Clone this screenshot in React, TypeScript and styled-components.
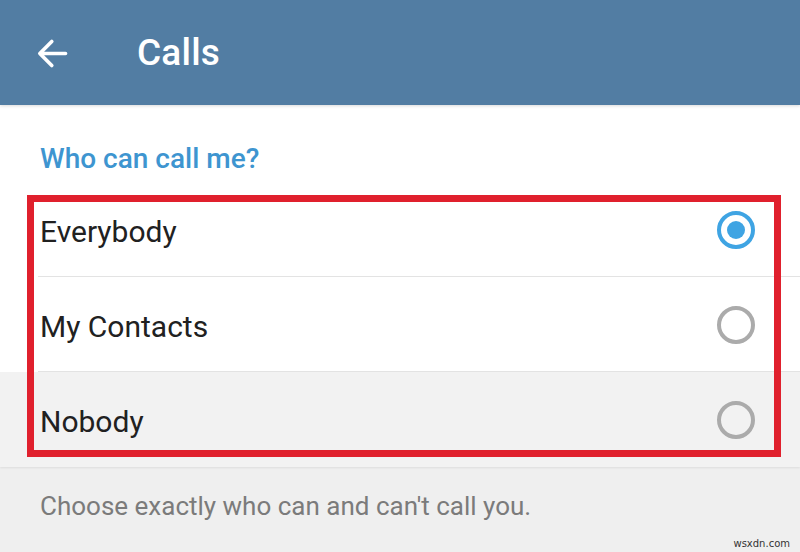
import React from "react";
import styled, { createGlobalStyle } from "styled-components";

const GlobalStyle = createGlobalStyle`
  body {
    margin: 0;
    background: #efefef;
    font-family: Roboto, "Noto Sans", Arial, sans-serif;
  }
`;

const Page = styled.div`
  width: 800px;
  height: 552px;
  overflow: hidden;
  position: relative;
  background: #efefef;
`;

const Header = styled.header`
  height: 105px;
  background: #527da3;
  display: flex;
  align-items: center;
  padding-left: 38px;
  box-shadow: 0 1px 3px rgba(0, 0, 0, 0.15);
  position: relative;
  z-index: 1;
`;

const BackButton = styled.svg`
  width: 29px;
  height: 29px;
  overflow: visible;
  margin-top: 1px;
`;

const Title = styled.h1`
  margin: 0 0 0 70px;
  color: #ffffff;
  font-size: 37px;
  font-weight: 500;
  letter-spacing: 0.2px;
`;

const Section = styled.section`
  background: #ffffff;
  box-shadow: 0 1px 2px rgba(0, 0, 0, 0.08);
`;

const SectionTitle = styled.div`
  height: 77px;
  padding: 30px 40px 0;
  box-sizing: border-box;
  display: flex;
  align-items: center;
  color: #3e95d0;
  font-size: 28px;
  font-weight: 500;
`;

const List = styled.div`
  position: relative;
`;

const Row = styled.div<{ $pressed?: boolean; $last?: boolean }>`
  height: 95px;
  display: flex;
  align-items: center;
  justify-content: space-between;
  padding: 0 45px 0 40px;
  position: relative;
  background: ${(p) => (p.$pressed ? "#f2f2f2" : "#ffffff")};

  &::after {
    content: "";
    display: ${(p) => (p.$last ? "none" : "block")};
    position: absolute;
    left: 38px;
    right: 0;
    bottom: 0;
    height: 1px;
    background: #e3e3e3;
  }
`;

const Label = styled.span`
  color: #212121;
  font-size: 30px;
  padding-top: 3px;
`;

const Radio = styled.span<{ $checked?: boolean }>`
  width: 38px;
  height: 38px;
  box-sizing: border-box;
  border-radius: 50%;
  border: 4px solid ${(p) => (p.$checked ? "#3fa4e3" : "#ababab")};
  display: flex;
  align-items: center;
  justify-content: center;

  &::before {
    content: "";
    display: ${(p) => (p.$checked ? "block" : "none")};
    width: 18px;
    height: 18px;
    border-radius: 50%;
    background: #3fa4e3;
  }
`;

const Highlight = styled.div`
  position: absolute;
  left: 27px;
  right: 19px;
  top: 13px;
  bottom: 10px;
  border: 7px solid #e0202d;
  pointer-events: none;
`;

const Hint = styled.p`
  margin: 0;
  padding: 24px 40px 0;
  color: #7b7b7b;
  font-size: 26px;
`;

const Watermark = styled.span`
  position: absolute;
  right: 10px;
  bottom: 3px;
  font-family: "DejaVu Sans", sans-serif;
  font-size: 10px;
  color: #333;
`;

const options = [
  { label: "Everybody", checked: true },
  { label: "My Contacts" },
  { label: "Nobody", pressed: true },
];

export default function App() {
  return (
    <Page>
      <GlobalStyle />
      <Header>
        <BackButton viewBox="4 4 16 16" fill="none">
          <path
            d="M5 12H19.2M11.6 5.4 5 12l6.6 6.6"
            stroke="#fff"
            strokeWidth={2}
            strokeLinecap="round"
            strokeLinejoin="round"
          />
        </BackButton>
        <Title>Calls</Title>
      </Header>
      <Section>
        <SectionTitle>Who can call me?</SectionTitle>
        <List>
          {options.map((o, i) => (
            <Row key={o.label} $pressed={o.pressed} $last={i === options.length - 1}>
              <Label>{o.label}</Label>
              <Radio $checked={o.checked} />
            </Row>
          ))}
          <Highlight />
        </List>
      </Section>
      <Hint>Choose exactly who can and can't call you.</Hint>
      <Watermark>wsxdn.com</Watermark>
    </Page>
  );
}
